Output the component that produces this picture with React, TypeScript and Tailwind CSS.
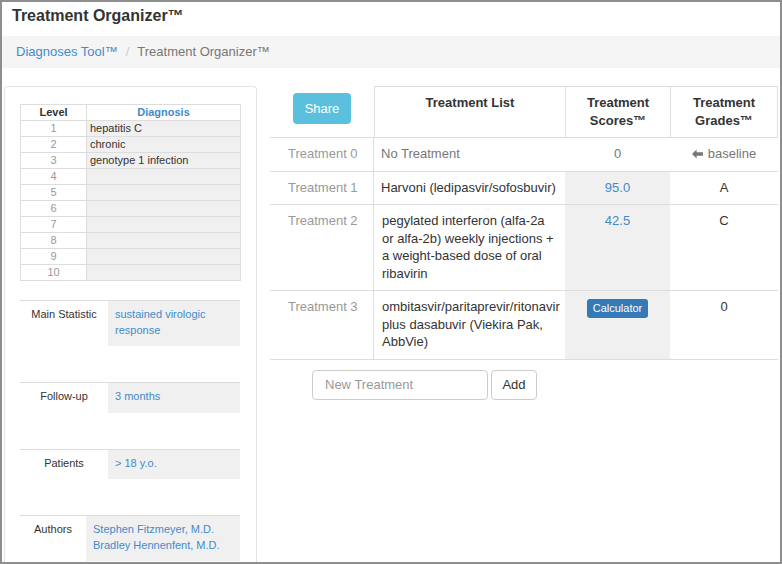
import { clsx } from 'clsx'

const diagnoses = ['hepatitis C', 'chronic', 'genotype 1 infection', '', '', '', '', '', '', '']

interface Info {
  label: string
  lines: string[]
  labelWidth: string
}

const infos: Info[] = [
  { label: 'Main Statistic', lines: ['sustained virologic', 'response'], labelWidth: 'w-[88px]' },
  { label: 'Follow-up', lines: ['3 months'], labelWidth: 'w-[88px]' },
  { label: 'Patients', lines: ['> 18 y.o.'], labelWidth: 'w-[88px]' },
  { label: 'Authors', lines: ['Stephen Fitzmeyer, M.D.', 'Bradley Hennenfent, M.D.'], labelWidth: 'w-[66px]' },
]

function ArrowLeft() {
  return (
    <svg width="11" height="10" viewBox="0 0 12 10" className="inline-block mr-[5px] -mt-[2px]">
      <path d="M0 5 L5 0 L5 3 L12 3 L12 7 L5 7 L5 10 Z" fill="#777" />
    </svg>
  )
}

const cols = 'grid grid-cols-[104px_191px_105px_108px]'
const row = clsx(cols, 'border-b border-[#ddd] leading-[17.5px]')

export default function App() {
  return (
    <div className="w-[782px] h-[564px] border-2 border-[#8e8e8e] overflow-hidden bg-white text-[#333] font-['Liberation_Sans',Arial,sans-serif]">
      {/* Title */}
      <h1 className="h-[34px] pl-[10px] pt-[6px] text-[16px] leading-[16px] font-bold text-[#333]">
        Treatment Organizer™
      </h1>

      {/* Breadcrumb */}
      <div className="h-[32px] bg-[#f5f5f5] pl-[14px] flex items-center text-[13px]">
        <span className="text-[#428bca]">Diagnoses Tool™</span>
        <span className="text-[#ccc] px-[8px]">/</span>
        <span className="text-[#777]">Treatment Organizer™</span>
      </div>

      <div className="flex pt-[18px]">
        {/* Left panel */}
        <div className="ml-[2px] w-[253px] h-[480px] border border-b-0 border-[#e3e3e3] rounded-t-[4px] pl-[15px] pt-[17px]">
          <div className="w-[221px] border-r border-b border-[#ddd] text-[11px]">
            <div className="flex h-[16px] leading-[15px] font-bold">
              <div className="w-[66px] border-l border-t border-[#ddd] text-center">Level</div>
              <div className="flex-1 border-l border-t border-[#ddd] text-center text-[#428bca]">Diagnosis</div>
            </div>
            {diagnoses.map((d, i) => (
              <div key={i} className="flex h-[16px] leading-[15px]">
                <div className="w-[66px] border-l border-t border-[#ddd] text-center text-[#999]">{i + 1}</div>
                <div className="flex-1 border-l border-t border-[#ddd] bg-[#f0f0f0] pl-[3px]">{d}</div>
              </div>
            ))}
          </div>

          <div className="mt-[19px] flex flex-col gap-[36px]">
            {infos.map((info) => (
              <div key={info.label} className="w-[220px] flex border-t border-[#ddd] text-[11px] leading-[15.5px]">
                <div className={clsx(info.labelWidth, 'text-center pt-[6px]')}>{info.label}</div>
                <div className="flex-1 bg-[#f0f0f0] pl-[7px] pt-[6px] pb-[8px] text-[#428bca]">
                  {info.lines.map((l) => (
                    <div key={l}>{l}</div>
                  ))}
                </div>
              </div>
            ))}
          </div>
        </div>

        {/* Right: treatment table */}
        <div className="ml-[13px] w-[508px] text-[13px]">
          <div className={clsx(cols, 'border-b border-[#ddd] font-bold leading-[18px] text-center')}>
            <div className="pt-[7px]">
              <button className="w-[58px] h-[31px] rounded-[4px] bg-[#5bc0de] text-white text-[13px] font-normal">
                Share
              </button>
            </div>
            <div className="border-t border-l border-[#ddd] pt-[7px] pb-[7px]">Treatment List</div>
            <div className="border-t border-l border-[#ddd] pt-[7px] pb-[7px]">
              Treatment
              <br />
              Scores™
            </div>
            <div className="border-t border-l border-r border-[#ddd] pt-[7px] pb-[7px]">
              Treatment
              <br />
              Grades™
            </div>
          </div>

          {/* Row 0 */}
          <div className={row}>
            <div className="pl-[18px] pt-[7px] pb-[8px] border-r border-[#ddd] text-[#999]">Treatment 0</div>
            <div className="pl-[7px] pt-[7px] text-[#777]">No Treatment</div>
            <div className="pt-[7px] text-center text-[#777]">0</div>
            <div className="pt-[7px] text-center text-[#777]">
              <ArrowLeft />
              baseline
            </div>
          </div>

          {/* Row 1 */}
          <div className={row}>
            <div className="pl-[18px] pt-[7px] pb-[8px] border-r border-[#ddd] text-[#999]">Treatment 1</div>
            <div className="pl-[7px] pt-[7px] pb-[8px]">Harvoni (ledipasvir/sofosbuvir)</div>
            <div className="pt-[7px] text-center bg-[#f0f0f0] text-[#428bca]">95.0</div>
            <div className="pt-[7px] text-center">A</div>
          </div>

          {/* Row 2 */}
          <div className={row}>
            <div className="pl-[18px] pt-[7px] pb-[8px] border-r border-[#ddd] text-[#999]">Treatment 2</div>
            <div className="pl-[8px] pr-[8px] pt-[7px] pb-[8px]">
              pegylated interferon (alfa-2a or alfa-2b) weekly injections + a weight-based dose of oral ribavirin
            </div>
            <div className="pt-[7px] text-center bg-[#f0f0f0] text-[#428bca]">42.5</div>
            <div className="pt-[7px] text-center">C</div>
          </div>

          {/* Row 3 */}
          <div className={row}>
            <div className="pl-[18px] pt-[7px] pb-[8px] border-r border-[#ddd] text-[#999]">Treatment 3</div>
            <div className="pl-[8px] pr-[8px] pt-[7px] pb-[8px]">
              ombitasvir/paritaprevir/ritonavir plus dasabuvir (Viekira Pak, AbbVie)
            </div>
            <div className="pt-[8px] flex justify-center items-start bg-[#f0f0f0]">
              <button className="h-[19px] px-[6px] rounded-[3px] bg-[#337ab7] text-white text-[11px] leading-[19px]">
                Calculator
              </button>
            </div>
            <div className="pt-[7px] text-center">0</div>
          </div>

          {/* New treatment */}
          <div className="flex gap-[3px] pl-[42px] pt-[10px]">
            <input
              placeholder="New Treatment"
              className="w-[176px] h-[30px] rounded-[4px] border border-[#ccc] px-[12px] text-[13px] placeholder:text-[#999] outline-none"
            />
            <button className="w-[46px] h-[30px] rounded-[4px] border border-[#ccc] bg-white text-[13px] text-[#333]">
              Add
            </button>
          </div>
        </div>
      </div>
    </div>
  )
}
